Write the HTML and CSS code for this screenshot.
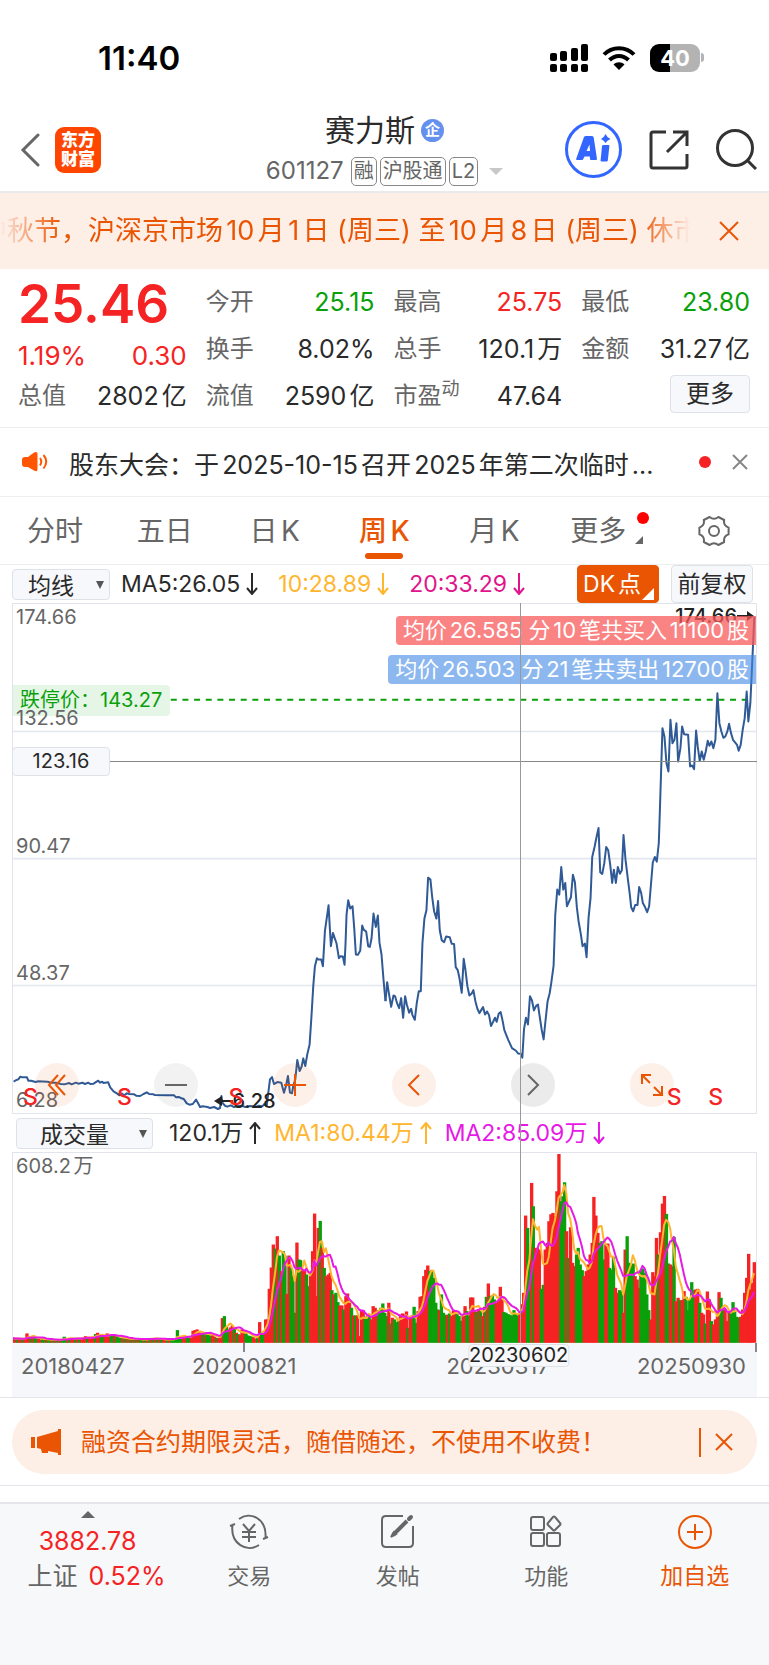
FILE: index.html
```
<!DOCTYPE html>
<html lang="zh-CN">
<head>
    <meta charset="UTF-8">
    <meta name="viewport" content="width=device-width, initial-scale=1.0">
    <title>赛力斯 601127</title>
    <link rel="stylesheet" href="styles.css">
</head>
<body>
    <div class="status-bar">
        <span class="clock">11:40</span>
        <div class="status-icons">
            <svg width="38" height="28" viewBox="0 0 38 28">
                <rect x="0" y="9" width="7" height="8" rx="2"/>
                <rect x="10" y="7" width="7" height="10" rx="2"/>
                <rect x="21" y="4" width="7" height="13" rx="2"/>
                <rect x="31" y="0" width="7" height="17" rx="2"/>
                <rect x="0" y="20" width="7" height="8" rx="2"/>
                <rect x="10" y="20" width="7" height="8" rx="2"/>
                <rect x="21" y="20" width="7" height="8" rx="2"/>
                <rect x="31" y="20" width="7" height="8" rx="2"/>
            </svg>
            <svg width="34" height="26" viewBox="0 0 34 26" fill="none" stroke="#000" stroke-width="4">
                <path d="M2 9.500 C10 1 24 1 32 9.500"/>
                <path d="M7.500 15 C13 9.500 21 9.500 26.500 15"/>
                <path d="M17 25 L11.500 19.500 C14.500 16.500 19.500 16.500 22.500 19.500 Z" fill="#000" stroke="none"/>
            </svg>
            <div class="battery"><span>40</span></div>
        </div>
    </div>

    <header class="header">
        <div class="header-left">
            <button class="icon-btn" aria-label="返回">
                <svg width="20" height="34" viewBox="0 0 20 34" fill="none" stroke="#666" stroke-width="3"><path d="M18 2 L3 17 L18 32" stroke-linecap="round"/></svg>
            </button>
            <a class="logo" href="#">东方<br>财富</a>
        </div>
        <div class="header-title">
            <h1>赛力斯<span class="corp">企</span></h1>
            <div class="code">
                <span>601127</span>
                <span class="tag">融</span><span class="tag">沪股通</span><span class="tag">L2</span>
                <i class="caret"></i>
            </div>
        </div>
        <div class="header-right">
            <button class="icon-btn" aria-label="Ai">
                <svg width="57" height="57" viewBox="0 0 57 57">
                    <circle cx="28.500" cy="28.500" r="27" fill="none" stroke="#3366ff" stroke-width="3"/>
                    <path fill="#3366ff" fill-rule="evenodd" d="M19 16 Q19.500 15 21 15 H27 Q28.500 15 28.700 16.500 L32 38 Q32 39 31 39 H26 Q25 39 25 38 L24.800 35.500 H19.500 L18.300 38 Q18 39 17 39 H12 Q10.800 39 11.200 37.800 Z M21.500 30 H25 L24.500 23.500 Z"/>
                    <path fill="#3366ff" d="M38.500 24 H43.500 Q44.600 24 44.400 25 L42.800 39.500 Q42.700 40.500 41.500 40.500 H36.500 Q35.500 40.500 35.600 39.500 L37 25 Q37.200 24 38.500 24 Z M40.500 13 Q42 16.500 45.500 18 Q42 19.500 40.500 22 Q39 19.500 36 18 Q39 16.500 40.500 13 Z"/>
                </svg>
            </button>
            <button class="icon-btn" aria-label="分享">
                <svg width="40" height="40" viewBox="0 0 40 40" fill="none" stroke="#333" stroke-width="3"><path d="M17 2 H4 Q2 2 2 4 V36 Q2 38 4 38 H36 Q38 38 38 36 V24"/><path d="M24 2 H38 V16 M37 3 L18 22"/></svg>
            </button>
            <button class="icon-btn" aria-label="搜索">
                <svg width="41" height="41" viewBox="0 0 41 41" fill="none" stroke="#333" stroke-width="3"><circle cx="19" cy="19" r="17.500"/><path d="M31 31 L40 40"/></svg>
            </button>
        </div>
    </header>

    <div class="notice">
        <div class="marquee"><p>中秋节，沪深京市场10月1日 (周三) 至10月8日 (周三) 休市</p></div>
        <button class="icon-btn" aria-label="关闭">
            <svg width="20" height="20" viewBox="0 0 20 20" fill="none" stroke="#ea5504" stroke-width="2"><path d="M1 1 L19 19 M19 1 L1 19"/></svg>
        </button>
    </div>

    <section class="quote">
        <div class="price red">25.46</div>
        <div class="change red"><span>1.19%</span><span>0.30</span></div>
        <dl class="pair cap"><dt>总值</dt><dd>2802亿</dd></dl>
        <dl class="pair"><dt>今开</dt><dd class="green">25.15</dd></dl>
        <dl class="pair"><dt>最高</dt><dd class="red">25.75</dd></dl>
        <dl class="pair"><dt>最低</dt><dd class="green">23.80</dd></dl>
        <dl class="pair"><dt>换手</dt><dd>8.02%</dd></dl>
        <dl class="pair"><dt>总手</dt><dd>120.1万</dd></dl>
        <dl class="pair"><dt>金额</dt><dd>31.27亿</dd></dl>
        <dl class="pair"><dt>流值</dt><dd>2590亿</dd></dl>
        <dl class="pair"><dt>市盈<sup>动</sup></dt><dd>47.64</dd></dl>
        <button class="more">更多</button>
    </section>

    <div class="news">
        <svg width="26" height="22" viewBox="0 0 26 22">
            <path d="M3 6 H6 L12 1.500 Q15.500 0 15.500 3 V18 Q15.500 21.500 12 19.500 L6 16 H3 Q0 16 0 13 V9 Q0 6 3 6 Z" fill="#ff5500"/>
            <path d="M18 7 Q20.500 10.500 18 14.500 M21.500 4 Q27 10.500 21.500 17.500" fill="none" stroke="#ff5500" stroke-width="2"/>
        </svg>
        <a href="#">股东大会：于2025-10-15召开2025年第二次临时...</a>
        <i class="dot"></i>
        <button class="icon-btn" aria-label="关闭">
            <svg width="16" height="16" viewBox="0 0 16 16" fill="none" stroke="#888" stroke-width="2"><path d="M1 1 L15 15 M15 1 L1 15"/></svg>
        </button>
    </div>

    <nav class="tabs">
        <button>分时</button>
        <button>五日</button>
        <button>日K</button>
        <button class="active">周K</button>
        <button>月K</button>
        <button class="has-more">更多</button>
        <button aria-label="设置">
            <svg width="32" height="30" viewBox="0 0 32 30" fill="none" stroke="#666" stroke-width="2" stroke-linejoin="round"><path d="M30.600 18.400 Q25.100 20.300 26.200 26 L20.400 29 Q16 25.500 11.600 29 L5.800 26 Q6.900 20.300 1.400 18.400 V11.600 Q6.900 9.700 5.800 4 L11.600 1 Q16 4.500 20.400 1 L26.200 4 Q25.100 9.700 30.600 11.600 Z"/><circle cx="16" cy="15" r="5"/></svg>
        </button>
    </nav>

    <main class="chart">
        <div class="toolbar ma">
            <span class="select"><select aria-label="指标"><option>均线</option></select></span>
            <span class="ind">MA5:26.05<svg class="arrow" viewBox="0 0 12 22"><path d="M6 0 V21 M1 15 L6 21 L11 15"/></svg></span>
            <span class="ind gold">10:28.89<svg class="arrow" viewBox="0 0 12 22"><path d="M6 0 V21 M1 15 L6 21 L11 15"/></svg></span>
            <span class="ind pink">20:33.29<svg class="arrow" viewBox="0 0 12 22"><path d="M6 0 V21 M1 15 L6 21 L11 15"/></svg></span>
            <button class="dk">DK点</button>
            <button class="adjust">前复权</button>
        </div>

        <div class="panel price-panel">
            <svg class="plot" viewBox="0 0 2232 1530" preserveAspectRatio="none">
                <path class="grid" d="M0 383 H2232 M0 765 H2232 M0 1146 H2232"/>
                <path class="limit-line" d="M474 288 H2220"/>
                <g class="line">
                    <polyline transform="translate(-36 708)" points="38,727 46,722 52,720 58,712 64,714 78,714 82,724 90,724 104,728 110,726 140,727 150,730 165,730 180,734 190,735 205,731 212,735 225,730 232,733 245,730 252,734 262,730 268,734 278,733 292,724 298,730 304,727 308,731 322,729 328,744 338,756 348,762 356,768 362,762 370,768 378,762 385,764 400,765 406,769 418,770 428,764 438,759 445,764 458,765 462,767 500,768 520,768 526,774 535,773 542,777 549,779 558,792 566,796 576,794 586,781 592,792 598,803 606,801 620,803 628,806 640,803 652,809 658,806 662,770 666,792 674,800 680,802 690,798 700,803 720,799 735,803 750,800 765,803 775,799 785,801 790,795 798,800 803,760 808,720 814,713 820,734 830,728 842,730 850,760 856,740 862,710 868,760 874,762 878,740 884,720 890,662 897,695 903,682 908,657 914,680 920,645 927,615 932,540 938,440 943,380 949,356 953,360 962,360 967,380 973,275 984,197 988,270 991,320 997,280 1008,312 1015,356 1020,350 1027,351 1032,376 1035,310 1038,225 1043,182 1049,207 1056,200 1061,265 1066,345 1072,346 1079,334 1085,258 1090,271 1097,276 1103,320 1108,322 1113,297 1119,222 1126,262 1132,228 1137,310 1143,345 1149,420 1155,485"/>
                    <polyline transform="translate(1119 708)" points="0,485 5,428 10,460 17,502 24,468 29,471 35,492 41,506 47,476 53,535 59,470 64,495 71,520 77,508 81,527 88,541 94,490 100,455 106,455 111,310 117,236 123,212 128,114 135,120 140,170 146,215 153,237 158,184 163,272 169,302 176,308 182,291 193,293 199,313 206,313 211,383 217,392 222,415 229,460 235,358 240,390 246,440 252,468 259,462 264,452 270,485 276,508 282,521 293,503 299,525 305,516 311,527 317,560 329,535 334,547 340,523 346,518 352,545 357,572 369,602 380,626 392,634 398,642 406,643 411,655 416,570 422,535 428,555 434,470 440,483 446,513 452,500 458,495 463,530 469,570 475,600 480,550 487,485 493,462 498,430 505,378 510,225 516,150 522,165 528,82 534,150 540,130 545,200 557,173 563,105 569,128 575,205 580,245 587,285 592,320 599,312 604,353 610,235 616,175 621,52 628,22 634,-8 640,-35 645,98 651,103 657,72 663,22 669,32 675,75 681,130 686,90 692,130 698,82 704,102 710,92 715,-14 721,60 728,118 734,165 738,203 744,215 750,196 757,196 762,142 768,160 773,190 780,203 786,218 792,200 797,140 803,68 809,52 815,66 821,10 824,-80"/>
                    <polyline transform="translate(1119 -132)" points="824,760 832,505 838,530 844,610 850,635 856,480 862,550 868,540 874,490 879,605 886,565 891,500 897,523 909,525 915,620 921,617 927,628 933,512 938,560 944,604 950,575 956,600 962,575 968,543 973,558 979,545 985,565 991,540 997,400 1003,490 1009,515 1015,534 1021,530 1027,515 1032,492 1038,520 1044,540 1056,555 1061,573 1067,555 1073,510 1079,475 1085,395 1090,485 1096,430 1102,300 1108,170"/>
                </g>
            </svg>
            <span class="limit-tag">跌停价：143.27</span>
            <span class="scale s0">174.66</span>
            <span class="scale s1">132.56</span>
            <span class="scale s2">90.47</span>
            <span class="scale s3">48.37</span>
            <span class="scale s4">6.28</span>
            <span class="peak">174.66<svg width="17" height="10" viewBox="0 0 17 10"><path d="M0 5 H12" stroke="#222" stroke-width="2"/><path d="M10 0 L17 5 L10 10 Z" fill="#222"/></svg></span>
            <span class="low"><svg width="19" height="10" viewBox="0 0 19 10"><path d="M6 5 H19" stroke="#222" stroke-width="2"/><path d="M8 0 L0 5 L8 10 Z" fill="#222"/></svg>6.28</span>
            <span class="trade buy">均价26.585 分10笔共买入11100股</span>
            <span class="trade sell">均价26.503 分21笔共卖出12700股</span>
            <span class="cursor-price">123.16</span>
            <div class="controls">
                <button aria-label="最早"><svg width="20" height="22" viewBox="0 0 20 22"><path d="M11 1 L2 11 L11 21 M18 1 L9 11 L18 21"/></svg></button>
                <button class="grey" aria-label="缩小"><svg width="22" height="22" viewBox="0 0 22 22"><path d="M0 11 H22"/></svg></button>
                <button aria-label="放大"><svg width="22" height="22" viewBox="0 0 22 22"><path d="M0 11 H22 M11 0 V22"/></svg></button>
                <button aria-label="左移"><svg width="14" height="22" viewBox="0 0 14 22"><path d="M12 1 L2 11 L12 21"/></svg></button>
                <button class="grey dark" aria-label="右移"><svg width="14" height="22" viewBox="0 0 14 22"><path d="M2 1 L12 11 L2 21"/></svg></button>
                <button aria-label="全屏"><svg width="22" height="22" viewBox="0 0 22 22"><path d="M1 10 V1 H10 M1 1 L9 9 M21 12 V21 H12 M21 21 L13 13"/></svg></button>
            </div>
            <b class="sell-mark m1">S</b>
            <b class="sell-mark m2">S</b>
            <b class="sell-mark m3">S</b>
            <b class="sell-mark m4">S</b>
            <b class="sell-mark m5">S</b>
        </div>

        <div class="toolbar vol">
            <span class="select wide"><select aria-label="副图指标"><option>成交量</option></select></span>
            <span class="ind">120.1万<svg class="arrow" viewBox="0 0 12 22"><path d="M6 22 V1 M1 7 L6 1 L11 7"/></svg></span>
            <span class="ind gold">MA1:80.44万<svg class="arrow" viewBox="0 0 12 22"><path d="M6 22 V1 M1 7 L6 1 L11 7"/></svg></span>
            <span class="ind magenta">MA2:85.09万<svg class="arrow" viewBox="0 0 12 22"><path d="M6 0 V21 M1 15 L6 21 L11 15"/></svg></span>
        </div>

        <div class="panel volume-panel">
            <svg class="plot" id="volume" viewBox="0 0 2232 570" preserveAspectRatio="none"></svg>
            <span class="scale s0">608.2万</span>
        </div>
        <div class="axis">
            <span>20180427</span>
            <span>20200821</span>
            <span>20230317</span>
            <span>20250930</span>
            <b class="cursor-date">20230602</b>
        </div>
        <i class="cursor-line"></i>
    </main>

    <div class="promo-wrap">
        <div class="promo">
            <svg width="31" height="27" viewBox="0 0 31 27" fill="#ea5504"><path d="M0 8 H4 V19 H0 Z M6 8 L27 2 V0 H30 V26 H27 V24 L17 22 V24 H11 L10 20 L6 19 Z"/></svg>
            <a href="#">融资合约期限灵活，随借随还，不使用不收费！</a>
            <button class="icon-btn" aria-label="关闭">
                <svg width="18" height="18" viewBox="0 0 18 18" fill="none" stroke="#ea5504" stroke-width="2"><path d="M1 1 L17 17 M17 1 L1 17"/></svg>
            </button>
        </div>
    </div>

    <footer class="bottom-bar">
        <a class="index" href="#">
            <i class="up"></i>
            <span class="red">3882.78</span>
            <span class="index-name">上证 <em class="red">0.52%</em></span>
        </a>
        <a href="#">
            <svg width="40" height="36" viewBox="0 0 40 36" fill="none" stroke="#666" stroke-width="2"><path d="M10 5 C21 -3 38 4 36.500 24 L34 25 M36.500 24 L39 23 M30 31 C18 39 1 30 3.500 11 L1 12 M3.500 11 L6 10"/><path d="M14 10 L20 17 L26 10 M13 18 H27 M13 23 H27 M20 17 V28"/></svg>
            <span>交易</span>
        </a>
        <a href="#">
            <svg width="34" height="36" viewBox="0 0 34 36" fill="none" stroke="#666" stroke-width="2"><path d="M22 2 H5 Q1 2 1 6 V29 Q1 33 5 33 H28 Q32 33 32 29 V12"/><path d="M12 21 L26 7" stroke-width="4"/><path d="M10 23 L15 20 L13 18 Z" fill="#666"/><path d="M28 5 L30 3" stroke-width="4" stroke-linecap="round"/></svg>
            <span>发帖</span>
        </a>
        <a href="#">
            <svg width="32" height="36" viewBox="0 0 32 36" fill="none" stroke="#666" stroke-width="2"><rect x="1" y="3" width="13" height="13" rx="2"/><rect x="1" y="19" width="13" height="13" rx="2"/><rect x="17" y="19" width="13" height="13" rx="2"/><path d="M23 3 Q24 2 25 3 L30 9 Q31 10 30 11 L25 16 Q24 17 23 16 L18 11 Q17 10 18 9 Z"/></svg>
            <span>功能</span>
        </a>
        <a class="add" href="#">
            <svg width="36" height="36" viewBox="0 0 36 36" fill="none" stroke="#ea5504" stroke-width="2"><circle cx="18" cy="18" r="16"/><path d="M10 18 H26 M18 10 V26"/></svg>
            <span>加自选</span>
        </a>
    </footer>

    <script src="script.js"></script>
</body>
</html>
```

FILE: styles.css
```
* {
    box-sizing: border-box;
}

body {
    margin: 0;
    min-height: 100vh;
    display: flex;
    flex-direction: column;
    background: #fff;
    color: #2a2a2a;
    font-family: Inter, "Noto Sans CJK SC", sans-serif;
    font-size: 24px;
    line-height: 32px;
    text-autospace: normal;
}

button, select {
    font: inherit;
    color: inherit;
    margin: 0;
    padding: 0;
    border: 0;
    background: none;
}

a {
    color: inherit;
    text-decoration: none;
}

svg {
    display: block;
}

.red {
    color: #f52323;
}

.green {
    color: #0aa00a;
}

.icon-btn {
    display: flex;
    align-items: center;
}

/* status bar */
.status-bar {
    display: flex;
    justify-content: space-between;
    align-items: center;
    height: 112px;
    padding: 3px 69px 0 98px;
}

.clock {
    font-size: 33px;
    font-weight: 600;
    color: #000;
}

.status-icons {
    display: flex;
    align-items: center;
    gap: 14px;
}

.battery {
    position: relative;
    width: 50px;
    height: 28px;
    border-radius: 9px;
    background: linear-gradient(to right, #000 40%, #b3b3b3 40%);
    color: #fff;
    font-size: 22px;
    font-weight: 700;
    line-height: 28px;
    text-align: center;
}

.battery::after {
    content: '';
    position: absolute;
    left: 51px;
    top: 9px;
    width: 3px;
    height: 9px;
    border-radius: 0 3px 3px 0;
    background: #b3b3b3;
}

/* header */
.header {
    display: grid;
    grid-template-columns: 1fr auto 1fr;
    align-items: center;
    height: 81px;
    padding: 0 12px 6px;
    border-bottom: 2px solid #e9eaee;
}

.header-left, .header-right {
    display: flex;
    align-items: center;
    gap: 15px;
}

.header-left {
    padding-left: 8px;
}

.header-right {
    justify-content: flex-end;
    gap: 27px;
}

.logo {
    width: 46px;
    height: 46px;
    padding: 4px 0;
    border-radius: 9px;
    background: #ff4600;
    color: #fff;
    font-size: 17px;
    font-weight: 900;
    line-height: 19px;
    text-align: center;
}

.header-title h1 {
    display: flex;
    justify-content: center;
    align-items: center;
    gap: 6px;
    margin: 0;
    font-size: 30px;
    font-weight: 400;
    line-height: 36px;
}

.corp {
    width: 23px;
    height: 23px;
    border-radius: 50%;
    background: #6490ee;
    color: #fff;
    font-size: 15px;
    font-weight: 700;
    line-height: 22px;
    text-align: center;
}

.code {
    display: flex;
    align-items: center;
    gap: 3px;
    margin-top: 7px;
    color: #666;
    font-size: 24px;
}

.code span:first-child {
    margin-right: 4px;
}

.tag {
    padding: 0 2px;
    border: 1px solid #888;
    border-radius: 5px;
    font-size: 20px;
    line-height: 27px;
}

.caret {
    margin-left: 8px;
    border: 7px solid transparent;
    border-top-color: #c8c8c8;
    border-bottom: 0;
}

/* notice */
.notice {
    display: flex;
    align-items: center;
    justify-content: space-between;
    height: 76px;
    padding-right: 30px;
    background: #fdeee6;
    color: #ea5504;
    font-size: 27px;
}

.marquee {
    width: 690px;
    overflow: hidden;
    white-space: nowrap;
    -webkit-mask-image: linear-gradient(to right, transparent, #000 60px, #000 640px, transparent);
    mask-image: linear-gradient(to right, transparent, #000 60px, #000 640px, transparent);
}

.marquee p {
    margin: 0 0 0 -20px;
}

/* quote */
.quote {
    display: grid;
    grid-template-columns: repeat(4, 1fr);
    grid-template-rows: repeat(3, 47px);
    column-gap: 19px;
    padding: 9px 19px 8px 18px;
    border-bottom: 1px solid #eee;
}

.price {
    grid-column: 1;
    grid-row: 1;
    font-size: 53px;
    font-weight: 600;
    line-height: 52px;
}

.change {
    grid-column: 1;
    grid-row: 2;
    display: flex;
    justify-content: space-between;
    padding-top: 15px;
    font-size: 26px;
}

.cap {
    grid-column: 1;
    grid-row: 3;
}

.pair {
    display: flex;
    align-items: center;
    justify-content: space-between;
    margin: 0;
    white-space: nowrap;
}

.pair dt {
    color: #666;
}

.pair dd {
    margin: 0;
    font-size: 25px;
}

.pair sup {
    font-size: 18px;
    line-height: 1px;
}

.more {
    justify-self: end;
    align-self: start;
    width: 80px;
    height: 38px;
    margin-top: 3px;
    border: 1px solid #dde1e8;
    border-radius: 4px;
    background: #f7f8fb;
}

/* news */
.news {
    display: flex;
    align-items: center;
    gap: 21px;
    height: 69px;
    padding: 0 21px 0 22px;
    border-bottom: 1px solid #eee;
    font-size: 25px;
}

.news a {
    flex: 1;
    padding-top: 5px;
    white-space: nowrap;
}

.dot {
    width: 12px;
    height: 12px;
    border-radius: 50%;
    background: #f52323;
}

/* tabs */
.tabs {
    display: flex;
    height: 68px;
    border-bottom: 1px solid #eee;
    color: #666;
    font-size: 28px;
}

.tabs button {
    position: relative;
    width: calc(100% / 7);
    display: flex;
    align-items: center;
    justify-content: center;
}

.tabs .active {
    color: #ea5504;
    font-weight: 500;
}

.tabs .active::after {
    content: '';
    position: absolute;
    bottom: 5px;
    width: 38px;
    height: 6px;
    border-radius: 3px;
    background: #ea5504;
}

.tabs .has-more {
    padding-right: 12px;
}

.has-more::before {
    content: '';
    position: absolute;
    top: 15px;
    right: 10px;
    width: 12px;
    height: 12px;
    border-radius: 50%;
    background: #f00;
}

.has-more::after {
    content: '';
    position: absolute;
    top: 39px;
    right: 16px;
    border: 4px solid #666;
    border-top-color: transparent;
    border-left-color: transparent;
}

/* chart */
.chart {
    position: relative;
    margin: 0 12px;
}

.toolbar {
    display: flex;
    align-items: center;
    height: 38px;
    font-size: 23px;
    text-autospace: no-autospace;
}

.select {
    position: relative;
    margin-right: 11px;
}

.select select {
    display: block;
    width: 98px;
    height: 31px;
    padding-right: 20px;
    border: 1px solid #dde1e8;
    border-radius: 4px;
    background: #f7f8fb;
    text-align: center;
    text-align-last: center;
    appearance: none;
}

.select.wide {
    margin: 0 16px 0 4px;
}

.select.wide select {
    width: 137px;
}

.select::after {
    content: '';
    position: absolute;
    top: 12px;
    right: 6px;
    border: 4px solid transparent;
    border-top: 8px solid #555;
    border-bottom: 0;
    pointer-events: none;
}

.ind {
    display: flex;
    align-items: center;
    gap: 6px;
    margin-right: 20px;
    white-space: nowrap;
}

.vol .ind {
    margin-right: 13px;
}

.arrow {
    width: 12px;
    height: 22px;
    fill: none;
    stroke: currentColor;
    stroke-width: 2;
}

.gold {
    color: #ffb62e;
}

.pink {
    color: #e0148c;
}

.magenta {
    color: #e619e6;
}

.dk, .adjust {
    position: relative;
    width: 82px;
    height: 38px;
    border: 1px solid #dde1e8;
    border-radius: 4px;
    background: #f7f8fb;
}

.dk {
    margin-left: auto;
    margin-right: 12px;
    padding-right: 12px;
    border-color: #ea5504;
    background: #ea5504;
    color: #fff;
    text-autospace: normal;
}

.dk::after {
    content: '';
    position: absolute;
    right: 4px;
    bottom: 2px;
    border: 6px solid #fff;
    border-top-color: transparent;
    border-left-color: transparent;
}

.adjust {
    margin-right: 4px;
}

.panel {
    position: relative;
    border: 1px solid #e1e4ec;
}

.plot {
    width: 100%;
    height: auto;
}

.grid {
    stroke: #e3e7ef;
    stroke-width: 5;
}

.line polyline {
    fill: none;
    stroke: #2f5a96;
    stroke-width: 6;
    stroke-linejoin: round;
}

.limit-line {
    stroke: #0aa00a;
    stroke-width: 6;
    stroke-dasharray: 18 17;
}

.scale {
    position: absolute;
    left: 3px;
    color: #666;
    font-size: 20px;
    line-height: 24px;
}

.s0 {
    top: 1px;
}

.s1 {
    bottom: calc(75% + 1px);
}

.s2 {
    bottom: calc(50% + 1px);
}

.s3 {
    bottom: calc(25% + 1px);
}

.s4 {
    bottom: 1px;
}

.limit-tag {
    position: absolute;
    top: 16%;
    left: 0;
    padding: 0 8px 0 7px;
    border-radius: 0 4px 4px 0;
    background: #e5f5e6;
    color: #0aa00a;
    font-size: 20px;
    line-height: 31px;
}

.peak, .low {
    position: absolute;
    display: flex;
    align-items: center;
    color: #222;
    font-size: 20px;
    font-weight: 500;
    line-height: 24px;
}

.peak {
    top: 0;
    right: 2px;
}

.low {
    left: 27%;
    bottom: 0;
}

.trade {
    position: absolute;
    right: 0;
    padding: 0 7px;
    border-radius: 4px 0 0 4px;
    color: #fff;
    font-size: 22px;
    line-height: 29px;
    white-space: nowrap;
}

.buy {
    top: 12px;
    background: rgba(248, 90, 90, 0.75);
}

.sell {
    top: 51px;
    background: rgba(64, 136, 228, 0.6);
}

.cursor-price {
    position: absolute;
    top: 28%;
    left: -1px;
    width: 98px;
    border: 1px solid #dde1e8;
    border-radius: 4px;
    background: #f7f8fb;
    font-size: 20px;
    line-height: 27px;
    text-align: center;
}

/* horizontal crosshair */
.cursor-price::after {
    content: '';
    position: absolute;
    top: 13px;
    left: 97px;
    width: calc(100vw - 122px);
    height: 1px;
    background: #888;
}

.controls {
    position: absolute;
    left: 3%;
    right: 11%;
    bottom: 6px;
    display: flex;
    justify-content: space-between;
}

.controls button {
    display: flex;
    align-items: center;
    justify-content: center;
    width: 44px;
    height: 44px;
    border-radius: 50%;
    background: rgba(234, 85, 4, 0.09);
}

.controls .grey {
    background: rgba(0, 0, 0, 0.05);
}

.controls .dark {
    background: rgba(0, 0, 0, 0.08);
}

.controls svg {
    fill: none;
    stroke: #ea5504;
    stroke-width: 2;
}

.controls .grey svg {
    stroke: #666;
}

.sell-mark {
    position: absolute;
    bottom: 3px;
    color: #f52323;
    font-size: 23px;
    font-weight: 500;
    line-height: 26px;
}

.m1 {
    left: 10px;
}

.m2 {
    left: 14%;
}

.m3 {
    left: 29%;
}

.m4 {
    left: 88%;
}

.m5 {
    right: 33px;
}

.bar-up {
    fill: #f52323;
}

.bar-down {
    fill: #0aa00a;
}

.avg {
    fill: none;
    stroke-width: 6;
    stroke-linejoin: round;
}

.avg-short {
    stroke: #ffb62e;
}

.avg-long {
    stroke: #e619e6;
}

.volume-panel {
    border-bottom: 0;
}

.axis {
    position: relative;
    display: grid;
    grid-template-columns: 171px 1fr 1fr auto;
    height: 54px;
    padding: 7px 11px 0 9px;
    background: linear-gradient(#888, #888) 231px 0 / 2px 9px no-repeat,
                linear-gradient(#888, #888) 100% 0 / 2px 9px no-repeat,
                #f6f7fa;
    color: #666;
    font-size: 22px;
}

.axis span:nth-child(3) {
    padding-left: 32px;
}

.cursor-date {
    position: absolute;
    z-index: 1;
    top: 1px;
    left: 68%;
    border: 1px solid #dde1e8;
    border-radius: 4px;
    background: #f7f8fb;
    color: #222;
    font-size: 20px;
    font-weight: 400;
    line-height: 21px;
    transform: translateX(-50%);
}

/* vertical crosshair */
.cursor-line {
    position: absolute;
    top: 38px;
    bottom: 54px;
    left: calc(68% + 1px);
    width: 1px;
    background: #999;
}

/* promo */
.promo-wrap {
    padding: 12px 12px 11px;
    border-top: 1px solid #e4e6ec;
    border-bottom: 1px solid #e4e6ec;
}

.promo {
    display: flex;
    align-items: center;
    gap: 19px;
    height: 64px;
    padding: 0 24px 0 19px;
    border-radius: 32px;
    background: #fdeee6;
    color: #ea5504;
    font-size: 25px;
}

.promo a {
    flex: 1;
}

.promo button {
    height: 29px;
    padding-left: 14px;
    border-left: 2px solid #ea5504;
}

/* bottom bar */
.bottom-bar {
    flex: 1;
    display: grid;
    grid-template-columns: 175px repeat(4, 1fr);
    align-items: start;
    margin-top: 16px;
    padding-top: 10px;
    border-top: 2px solid #e4e6ec;
    background: #f7f8fa;
    color: #666;
    font-size: 22px;
}

.bottom-bar a {
    display: flex;
    flex-direction: column;
    align-items: center;
    gap: 10px;
}

.bottom-bar .index {
    gap: 3px;
    margin-top: -3px;
    font-size: 25px;
}

.index-name {
    padding-left: 18px;
}

.bottom-bar em {
    margin-left: 4px;
    font-style: normal;
}

.bottom-bar .add {
    color: #ea5504;
}

.bottom-bar .add span {
    font-size: 23px;
}

.up {
    margin-bottom: 4px;
    border: 7px solid transparent;
    border-top: 0;
    border-bottom-color: #666;
}
```

FILE: script.js
```
// weekly volume, r = up week, g = down week
const volumes = `
r14 r12 g12 r13 r11 g10 r14 r28 r20 g18 r18 g14 g12 r12 r10 g11 g10 r10 g9 g9
r9 g8 r8 g9 r9 g10 g18 g12 r12 g14 r12 r14 g13 r12 g14 r14 r15 r20 g16 r16
r14 r18 g26 r30 r24 g18 g20 r20 r28 r24 g22 g20 r22 g20 g16 g14 r13 g14 r12 g12
r11 g10 r10 g12 r11 g10 g9 r10 g11 r12 g14 r12 g14 r14 g12 r10 g10 r9 r10 g10
r10 g9 g12 g14 g38 g16 g16 r18 r16 g18 g20 r20 r36 r38 r40 r32 r24 g26 r22 g30
g26 g22 r24 r18 g14 r14 r16 r74 g80 g50 g40 r46 r52 g42 r30 g26 r24 r40 r34 g28
g22 g20 g18 r16 r12 g16 r62 g32 g34 r70 r70 r162 r226 r295 g283 r320 g262 r215 g275 g262
r147 r262 g225 g200 g90 r301 g250 g248 r220 r218 g205 g170 r200 r275 r388 r140 r345 g366 r285 g225
r200 r205 r210 g158 r145 g150 g122 r112 r112 g100 r140 r148 r120 g105 r82 g82 r82 r20 r96 r98
g75 g80 g86 r70 r110 r105 r90 g98 g105 g118 g90 g80 r120 g58 r75 g70 g62 g66 r80 r88
r85 r94 g45 r80 r82 g108 g60 r95 r138 r140 r200 r219 r232 g215 g218 g195 g120 g100 r98 g145
g90 g84 r84 g88 r80 r96 r98 g86 g80 g66 r80 r110 g95 g80 r136 r136 r95 g92 r98 g95
r80 r108 g138 r178 g140 g143 g130 r120 r125 r168 r134 g92 g90 g86 g84 g82 g98 g88 g80 r90
r116 r150 r382 g345 g240 r480 g410 r285 r285 r280 g162 g174 r280 r300 r365 r386 r390 r380 r455 r567
g425 g440 g482 r335 g255 r347 r240 r230 g265 g285 g235 g218 r200 r215 r235 r265 r300 r438 r382 r330
g300 g305 g250 r296 r298 g225 g220 g258 r165 r150 g158 g155 r90 r280 g320 g240 g235 g238 r200 r190
r165 g215 g223 g210 g145 g98 r70 r212 r200 r315 g265 r332 r418 r441 g387 g238 r235 r230 g318 r125
r135 g128 r128 r155 g138 g98 g130 g182 g158 r160 r162 g120 r90 r85 g58 r154 r130 g65 r55 r70
r80 r152 g135 g98 r100 r65 r95 g90 g122 g98 g78 g76 r78 r100 r150 r195 r267 r160 r180 r242
`.trim().split(/\s+/).map(v => ({ up: v[0] === 'r', value: Number(v.slice(1)) }));

const svg = document.getElementById('volume');
const height = 570;
const step = 2232 / volumes.length;

function add(name, attrs) {
    const el = document.createElementNS('http://www.w3.org/2000/svg', name);
    for (const key in attrs) {
        el.setAttribute(key, attrs[key]);
    }
    svg.appendChild(el);
}

function average(days, className) {
    const points = volumes.map((v, i) => {
        const part = volumes.slice(Math.max(0, i - days + 1), i + 1);
        const mean = part.reduce((sum, p) => sum + p.value, 0) / part.length;
        return Math.round(i * step) + ',' + Math.round(height - mean);
    });
    add('polyline', { points: points.join(' '), class: 'avg ' + className });
}

volumes.forEach((v, i) => {
    add('rect', {
        x: Math.round(i * step) - 4,
        y: height - v.value,
        width: 10,
        height: v.value,
        class: v.up ? 'bar-up' : 'bar-down'
    });
});
average(5, 'avg-short');
average(10, 'avg-long');
```
